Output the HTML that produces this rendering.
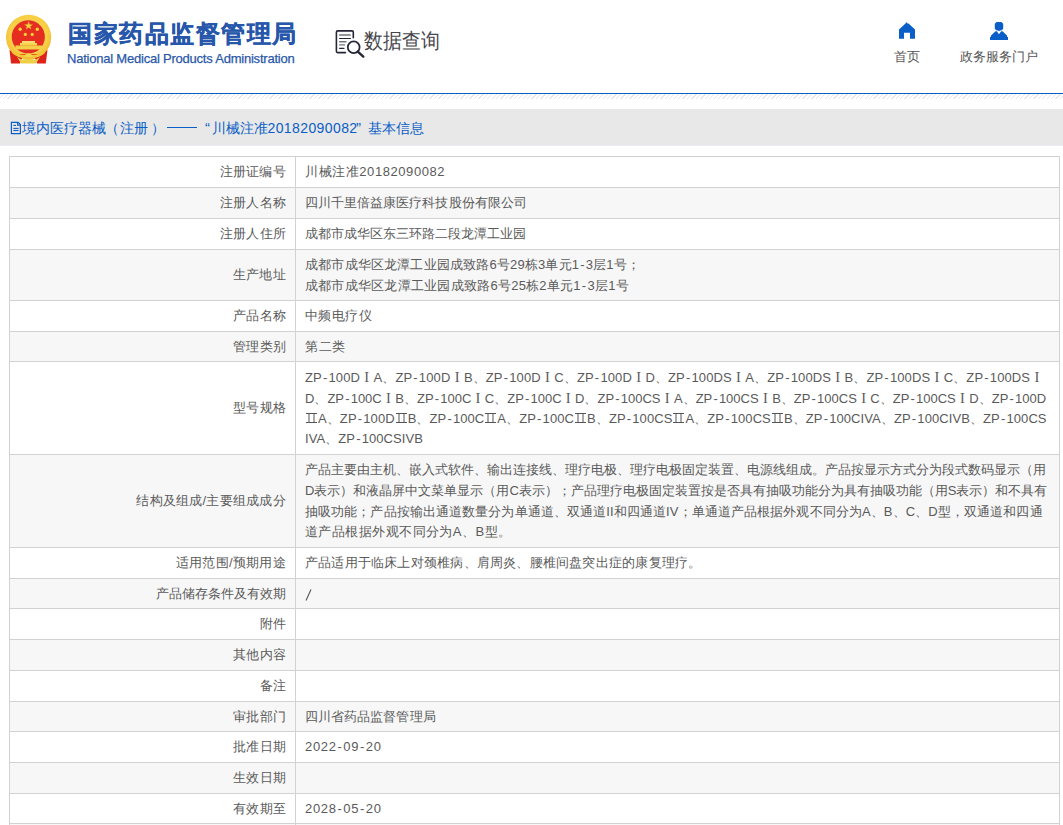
<!DOCTYPE html>
<html><head><meta charset="utf-8">
<style>
*{margin:0;padding:0;box-sizing:border-box}
html,body{width:1063px;height:825px;overflow:hidden;background:#fff;font-family:"Liberation Sans",sans-serif;color:#555}
.a{position:absolute;white-space:nowrap}
#title{left:68px;top:19px;font-size:24px;line-height:30px;font-weight:bold;color:#2757ab;letter-spacing:1.55px;-webkit-text-stroke:0.3px #2757ab}
#en{left:67px;top:51px;font-size:13px;line-height:16px;color:#2a58a8;letter-spacing:-0.22px;-webkit-text-stroke:0.25px #2a58a8}
#sq{left:364px;top:26.8px;font-size:19px;line-height:26px;color:#45454d;transform:scaleY(1.11);transform-origin:0 0}
.nav{font-size:13px;line-height:16px;color:#555}
#bl{left:0;top:93px;width:1063px;height:1px;background:#0a5ec6}
#hatch{left:0;top:94px;width:1063px;height:5px;background:repeating-linear-gradient(135deg,#fff 0,#fff 2.2px,#e6e6e6 2.2px,#e6e6e6 3.14px)}
#bar{left:0;top:109px;width:1063px;height:37px;background:#e8e8e8}
.bt{top:119px;font-size:14px;line-height:18px;color:#0b5ec6}
.row{position:absolute;left:9px;width:1051px;border:1px solid #d2d2d2;border-bottom:none}
.g{background:#f7f7f7}
.lab{position:absolute;right:773px;font-size:13px;line-height:20px;color:#5a5a5a;text-align:right}
.val{position:absolute;left:285px;padding-left:10px;font-size:13px;line-height:20.67px;color:#5a5a5a;white-space:nowrap}
.vl{position:absolute;left:285px;top:0;bottom:0;width:1px;background:#d2d2d2}
.d{}
.h{font-weight:normal;display:inline-block;width:6.6px;text-align:center}
.r{font-style:normal;display:inline-block;width:13.5px;text-align:center;font-family:'Liberation Serif',serif;font-size:14.5px}
.r2{display:inline-block;width:13px;text-align:center;vertical-align:baseline}
.r2 svg{vertical-align:0px}
</style></head><body>
<!-- emblem -->
<svg class="a" style="left:0;top:0" width="60" height="70" viewBox="0 0 60 70">
  <defs><radialGradient id="gg" cx="0.5" cy="0.45" r="0.6"><stop offset="0.7" stop-color="#f8cf45"/><stop offset="1" stop-color="#f0b02a"/></radialGradient></defs>
  <circle cx="28.6" cy="37.3" r="22.6" fill="url(#gg)"/>
  <circle cx="28.4" cy="36.9" r="17" fill="#e8eb70" opacity="0.6"/>
  <circle cx="28.3" cy="36.9" r="16.6" fill="#e52e20"/>
  <polygon points="28.6,21.2 29.7,24.4 33,24.4 30.3,26.4 31.3,29.6 28.6,27.6 25.9,29.6 26.9,26.4 24.2,24.4 27.5,24.4" fill="#f3d23c"/>
  <circle cx="20.2" cy="29.3" r="1.7" fill="#f3d23c"/>
  <circle cx="37.3" cy="29.3" r="1.7" fill="#f3d23c"/>
  <circle cx="25.3" cy="34.4" r="1.6" fill="#f3d23c"/>
  <circle cx="32.2" cy="34.4" r="1.6" fill="#f3d23c"/>
  <rect x="22" y="41" width="13" height="2.2" fill="#f6de74"/>
  <rect x="20" y="43" width="17" height="2.6" fill="#f5d64e"/>
  <rect x="15.5" y="45.5" width="26.5" height="4" fill="#f3d048"/>
  <path d="M9.5 50 L11 63.5 L20 63.5 L22 58 L35 58 L37 63.5 L45.8 63.5 L47.5 50 L42 54 L15 54 Z" fill="#dc241c"/>
  <path d="M11 49 Q20 57 28.5 54 Q37 57 46 49 L45 53 Q37 60 28.5 57.5 Q20 60 12 53Z" fill="#f3c63a"/>
  <path d="M17 57 L21 63.5 L36 63.5 L40 57 L35 60 L28.5 58.5 L22 60Z" fill="#f0cf48"/>
  <ellipse cx="28.5" cy="55.5" rx="3.2" ry="2" fill="#f6d84c"/>
</svg>
<div class="a" id="title">国家药品监督管理局</div>
<div class="a" id="en">National Medical Products Administration</div>
<!-- search doc icon -->
<svg class="a" style="left:330px;top:25px" width="40" height="35" viewBox="0 0 40 35">
  <path d="M23.3 12.7 V7.2 Q23.3 5.9 22 5.9 H7.7 Q6.4 5.9 6.4 7.2 V26.3 Q6.4 27.6 7.7 27.6 H15.5" fill="none" stroke="#262637" stroke-width="1.6" stroke-linecap="round"/>
  <line x1="9.6" y1="10" x2="20.2" y2="10" stroke="#73737f" stroke-width="1.3" stroke-linecap="round"/>
  <line x1="9.6" y1="13.5" x2="20.5" y2="13.5" stroke="#262637" stroke-width="1.2" stroke-linecap="round"/>
  <line x1="9.6" y1="16.75" x2="16" y2="16.75" stroke="#73737f" stroke-width="1.3" stroke-linecap="round"/>
  <line x1="9.6" y1="19.9" x2="14.5" y2="19.9" stroke="#73737f" stroke-width="1.3" stroke-linecap="round"/>
  <line x1="9.6" y1="23.3" x2="14" y2="23.3" stroke="#262637" stroke-width="1.2" stroke-linecap="round"/>
  <circle cx="23.7" cy="22.3" r="5.9" fill="none" stroke="#262637" stroke-width="1.8"/>
  <line x1="27.8" y1="26.6" x2="33.3" y2="31.6" stroke="#262637" stroke-width="2.4" stroke-linecap="round"/>
</svg>
<div class="a" id="sq">数据查询</div>
<!-- nav -->
<svg class="a" style="left:898px;top:21px" width="18" height="18" viewBox="0 0 18 18">
  <path d="M8.3 1 L9 2.2 L10.5 2.5 L17 8.5 V17.8 H12 V11.8 H6 V17.8 H1 V8.5 L7.5 2.5Z" fill="#0a5ec8"/>
</svg>
<div class="a nav" style="left:894px;top:48.7px">首页</div>
<svg class="a" style="left:989px;top:21px" width="20" height="20" viewBox="0 0 20 20">
  <path d="M7.6 1 H12.4 L14.2 2.8 V7.8 L12.4 9.6 L10.8 9.6 L10 10.4 L9.2 9.6 L7.6 9.6 L5.8 7.8 V2.8Z" fill="#0a5ec8"/>
  <path d="M6.5 10.2 H7.8 L10 13.3 L12.2 10.2 H13.5 L18 14.4 V15.6 L19 16.3 V18.9 H1 V16.3 L2 15.6 V14.4Z" fill="#0a5ec8"/>
</svg>
<div class="a nav" style="left:960px;top:48.7px">政务服务门户</div>

<div class="a" id="bl"></div>
<div class="a" id="hatch"></div>
<div class="a" id="bar"></div>
<div class="a" style="left:0;top:145px;width:1063px;height:1px;background:#eceef6"></div>
<svg class="a" style="left:10px;top:121px" width="12" height="14" viewBox="0 0 12 14">
  <path d="M1.4 1.3 H8.2 L10.4 3.5 V12.6 H1.4 Z" fill="none" stroke="#0b5ec6" stroke-width="1.2"/>
  <path d="M7.6 1.3 V4.1 H10.4" fill="none" stroke="#0b5ec6" stroke-width="1.1"/>
  <line x1="3.3" y1="4.4" x2="6" y2="4.4" stroke="#0b5ec6" stroke-width="1.1"/>
  <line x1="3.3" y1="7.4" x2="8.6" y2="7.4" stroke="#0b5ec6" stroke-width="1.1"/>
  <line x1="3.3" y1="9.5" x2="8.6" y2="9.5" stroke="#0b5ec6" stroke-width="1.1"/>
</svg>
<div class="a bt" style="left:22px">境内医疗器械</div>
<div class="a bt" style="left:104.5px">（</div>
<div class="a bt" style="left:120px">注册</div>
<div class="a bt" style="left:151px">）</div>
<div class="a" style="left:167px;top:127px;width:30px;height:1.2px;background:#0b5ec6"></div>
<div class="a bt" style="left:205px;font-size:15px">&#8220;</div>
<div class="a bt" style="left:212px">川械注准</div>
<div class="a bt" id="bdig" style="left:267.5px;letter-spacing:0.4px">20182090082</div>
<div class="a bt" style="left:356px;font-size:15px">&#8221;</div>
<div class="a bt" style="left:368px">基本信息</div>

<div id="tbl">
<div class="row" style="top:156px;height:31px"><div class="vl"></div>
<div class="lab" id="L0" style="top:5.0px;letter-spacing:0.300px">注册证编号</div>
<div class="val" id="v0_0" style="top:5.16px;letter-spacing:0.571px">川械注准<span class="d">20182090082</span></div>
</div>
<div class="row g" style="top:187px;height:31px"><div class="vl"></div>
<div class="lab" id="L1" style="top:5.0px;letter-spacing:0.200px">注册人名称</div>
<div class="val" id="v1_0" style="top:5.16px;letter-spacing:0.050px">四川千里倍益康医疗科技股份有限公司</div>
</div>
<div class="row" style="top:218px;height:31px"><div class="vl"></div>
<div class="lab" id="L2" style="top:5.0px;letter-spacing:0.200px">注册人住所</div>
<div class="val" id="v2_0" style="top:5.16px;letter-spacing:-0.012px">成都市成华区东三环路二段龙潭工业园</div>
</div>
<div class="row g" style="top:249px;height:51px"><div class="vl"></div>
<div class="lab" id="L3" style="top:15.0px;letter-spacing:0.267px">生产地址</div>
<div class="val" id="v3_0" style="top:4.83px;letter-spacing:0.171px">成都市成华区龙潭工业园成致路<span class="d">6</span>号<span class="d">29</span>栋<span class="d">3</span>单元<span class="d">1<b class="h">-</b>3</span>层<span class="d">1</span>号；</div>
<div class="val" id="v3_1" style="top:25.50px;letter-spacing:0.244px">成都市成华区龙潭工业园成致路<span class="d">6</span>号<span class="d">25</span>栋<span class="d">2</span>单元<span class="d">1<b class="h">-</b>3</span>层<span class="d">1</span>号</div>
</div>
<div class="row" style="top:300px;height:31px"><div class="vl"></div>
<div class="lab" id="L4" style="top:5.0px;letter-spacing:0.200px">产品名称</div>
<div class="val" id="v4_0" style="top:5.16px;letter-spacing:0.400px">中频电疗仪</div>
</div>
<div class="row g" style="top:331px;height:30px"><div class="vl"></div>
<div class="lab" id="L5" style="top:4.5px;letter-spacing:0.200px">管理类别</div>
<div class="val" id="v5_0" style="top:4.66px;letter-spacing:0.500px">第二类</div>
</div>
<div class="row" style="top:361px;height:93px"><div class="vl"></div>
<div class="lab" id="L6" style="top:36.0px;letter-spacing:0.200px">型号规格</div>
<div class="val" id="v6_0" style="top:5.16px;letter-spacing:0.114px"><span class="d">ZP<b class="h">-</b>100D</span><i class="r">I</i><span class="d">A</span>、<span class="d">ZP<b class="h">-</b>100D</span><i class="r">I</i><span class="d">B</span>、<span class="d">ZP<b class="h">-</b>100D</span><i class="r">I</i><span class="d">C</span>、<span class="d">ZP<b class="h">-</b>100D</span><i class="r">I</i><span class="d">D</span>、<span class="d">ZP<b class="h">-</b>100DS</span><i class="r">I</i><span class="d">A</span>、<span class="d">ZP<b class="h">-</b>100DS</span><i class="r">I</i><span class="d">B</span>、<span class="d">ZP<b class="h">-</b>100DS</span><i class="r">I</i><span class="d">C</span>、<span class="d">ZP<b class="h">-</b>100DS</span><i class="r">I</i></div>
<div class="val" id="v6_1" style="top:25.83px;letter-spacing:0.005px"><span class="d">D</span>、<span class="d">ZP<b class="h">-</b>100C</span><i class="r">I</i><span class="d">B</span>、<span class="d">ZP<b class="h">-</b>100C</span><i class="r">I</i><span class="d">C</span>、<span class="d">ZP<b class="h">-</b>100C</span><i class="r">I</i><span class="d">D</span>、<span class="d">ZP<b class="h">-</b>100CS</span><i class="r">I</i><span class="d">A</span>、<span class="d">ZP<b class="h">-</b>100CS</span><i class="r">I</i><span class="d">B</span>、<span class="d">ZP<b class="h">-</b>100CS</span><i class="r">I</i><span class="d">C</span>、<span class="d">ZP<b class="h">-</b>100CS</span><i class="r">I</i><span class="d">D</span>、<span class="d">ZP<b class="h">-</b>100D</span></div>
<div class="val" id="v6_2" style="top:46.50px;letter-spacing:0.085px"><i class="r2"><svg width="11" height="10" viewBox="0 0 11 10"><path d="M0 0.5H11M0 9.5H11M3 0V10M8 0V10" stroke="#555" stroke-width="1" fill="none"/></svg></i><span class="d">A</span>、<span class="d">ZP<b class="h">-</b>100D</span><i class="r2"><svg width="11" height="10" viewBox="0 0 11 10"><path d="M0 0.5H11M0 9.5H11M3 0V10M8 0V10" stroke="#555" stroke-width="1" fill="none"/></svg></i><span class="d">B</span>、<span class="d">ZP<b class="h">-</b>100C</span><i class="r2"><svg width="11" height="10" viewBox="0 0 11 10"><path d="M0 0.5H11M0 9.5H11M3 0V10M8 0V10" stroke="#555" stroke-width="1" fill="none"/></svg></i><span class="d">A</span>、<span class="d">ZP<b class="h">-</b>100C</span><i class="r2"><svg width="11" height="10" viewBox="0 0 11 10"><path d="M0 0.5H11M0 9.5H11M3 0V10M8 0V10" stroke="#555" stroke-width="1" fill="none"/></svg></i><span class="d">B</span>、<span class="d">ZP<b class="h">-</b>100CS</span><i class="r2"><svg width="11" height="10" viewBox="0 0 11 10"><path d="M0 0.5H11M0 9.5H11M3 0V10M8 0V10" stroke="#555" stroke-width="1" fill="none"/></svg></i><span class="d">A</span>、<span class="d">ZP<b class="h">-</b>100CS</span><i class="r2"><svg width="11" height="10" viewBox="0 0 11 10"><path d="M0 0.5H11M0 9.5H11M3 0V10M8 0V10" stroke="#555" stroke-width="1" fill="none"/></svg></i><span class="d">B</span>、<span class="d">ZP<b class="h">-</b>100C</span><span class="d">IV</span><span class="d">A</span>、<span class="d">ZP<b class="h">-</b>100C</span><span class="d">IV</span><span class="d">B</span>、<span class="d">ZP<b class="h">-</b>100CS</span></div>
<div class="val" id="v6_3" style="top:67.17px;letter-spacing:0.071px"><span class="d">IV</span><span class="d">A</span>、<span class="d">ZP<b class="h">-</b>100CS</span><span class="d">IV</span><span class="d">B</span></div>
</div>
<div class="row g" style="top:454px;height:93px"><div class="vl"></div>
<div class="lab" id="L7" style="top:36.0px;letter-spacing:0.255px">结构及组成<span class="d">/</span>主要组成成分</div>
<div class="val" id="v7_0" style="top:5.16px;letter-spacing:0.004px">产品主要由主机、嵌入式软件、输出连接线、理疗电极、理疗电极固定装置、电源线组成。产品按显示方式分为段式数码显示（用</div>
<div class="val" id="v7_1" style="top:25.83px;letter-spacing:0.000px"><span class="d">D</span>表示）和液晶屏中文菜单显示（用<span class="d">C</span>表示）；产品理疗电极固定装置按是否具有抽吸功能分为具有抽吸功能（用<span class="d">S</span>表示）和不具有</div>
<div class="val" id="v7_2" style="top:46.50px;letter-spacing:0.098px">抽吸功能；产品按输出通道数量分为单通道、双通道<span class="d">II</span>和四通道<span class="d">IV</span>；单通道产品根据外观不同分为<span class="d">A</span>、<span class="d">B</span>、<span class="d">C</span>、<span class="d">D</span>型，双通道和四通</div>
<div class="val" id="v7_3" style="top:67.17px;letter-spacing:0.440px">道产品根据外观不同分为<span class="d">A</span>、<span class="d">B</span>型。</div>
</div>
<div class="row" style="top:547px;height:31px"><div class="vl"></div>
<div class="lab" id="L8" style="top:5.0px;letter-spacing:0.300px">适用范围<span class="d">/</span>预期用途</div>
<div class="val" id="v8_0" style="top:5.16px;letter-spacing:0.214px">产品适用于临床上对颈椎病、肩周炎、腰椎间盘突出症的康复理疗。</div>
</div>
<div class="row g" style="top:578px;height:30px"><div class="vl"></div>
<div class="lab" id="L9" style="top:4.5px;letter-spacing:0.000px">产品储存条件及有效期</div>
<div class="val" id="v9_0" style="top:4.66px;letter-spacing:0.200px"><svg width="8" height="14" style="position:absolute;left:10px;top:4px" viewBox="0 0 8 14"><line x1="1" y1="12.5" x2="6" y2="1.5" stroke="#555" stroke-width="1.1"/></svg></div>
</div>
<div class="row" style="top:608px;height:31px"><div class="vl"></div>
<div class="lab" id="L10" style="top:5.0px;letter-spacing:0.200px">附件</div>
</div>
<div class="row g" style="top:639px;height:31px"><div class="vl"></div>
<div class="lab" id="L11" style="top:5.0px;letter-spacing:0.200px">其他内容</div>
</div>
<div class="row" style="top:670px;height:31px"><div class="vl"></div>
<div class="lab" id="L12" style="top:5.0px;letter-spacing:0.200px">备注</div>
</div>
<div class="row g" style="top:701px;height:30px"><div class="vl"></div>
<div class="lab" id="L13" style="top:4.5px;letter-spacing:0.200px">审批部门</div>
<div class="val" id="v13_0" style="top:4.66px;letter-spacing:0.067px">四川省药品监督管理局</div>
</div>
<div class="row" style="top:731px;height:31px"><div class="vl"></div>
<div class="lab" id="L14" style="top:5.0px;letter-spacing:0.200px">批准日期</div>
<div class="val" id="v14_0" style="top:5.16px;letter-spacing:0.689px"><span class="d">2022<b class="h">-</b>09<b class="h">-</b>20</span></div>
</div>
<div class="row g" style="top:762px;height:31px"><div class="vl"></div>
<div class="lab" id="L15" style="top:5.0px;letter-spacing:0.200px">生效日期</div>
</div>
<div class="row" style="top:793px;height:30px"><div class="vl"></div>
<div class="lab" id="L16" style="top:4.5px;letter-spacing:0.200px">有效期至</div>
<div class="val" id="v16_0" style="top:4.66px;letter-spacing:0.689px"><span class="d">2028<b class="h">-</b>05<b class="h">-</b>20</span></div>
</div>
<div class="row g" style="top:823px;height:10px"><div class="vl"></div></div>
</div>
</body></html>
